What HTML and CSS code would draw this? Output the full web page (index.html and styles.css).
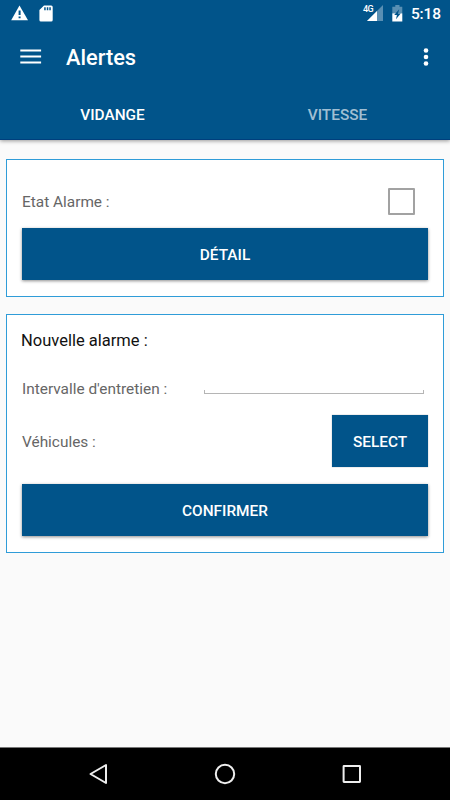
FILE: index.html
```
<!DOCTYPE html>
<html lang="fr">
<head>
  <meta charset="UTF-8">
  <meta name="viewport" content="width=device-width, initial-scale=1">
  <title>Alertes</title>
  <link rel="stylesheet" href="styles.css">
</head>
<body>

<header class="appbar">
  <!-- barre de statut -->
  <div class="status">
    <svg class="ic-warning" width="18" height="16" viewBox="0 0 18 16">
      <path fill="#fff" d="M8.5 0.5L17 15.2H0.2z"/>
      <path fill="#01548a" d="M7.6 5.5h2v4.6h-2zM7.6 11.5h2v1.8h-2z"/>
    </svg>
    <svg class="ic-sd" width="14" height="17" viewBox="0 0 14 17">
      <path fill="#fff" d="M5 0.5h7.2a1.5 1.5 0 0 1 1.5 1.5v13a1.5 1.5 0 0 1-1.5 1.5H1.9A1.5 1.5 0 0 1 .4 15V5z"/>
      <path fill="#01548a" d="M5.2 2.3h1.5v3H5.2zM7.8 2.3h1.5v3H7.8zM10.3 2.3h1.5v3h-1.5z"/>
    </svg>
    <div class="signal">
      <svg width="16" height="16" viewBox="0 0 16 16">
        <path fill="#fff" opacity=".35" d="M16 0v16H0z"/>
        <path fill="#fff" d="M10 6v10H0z"/>
      </svg>
      <span class="net">4G</span>
    </div>
    <svg class="ic-battery" width="11" height="17" viewBox="0 0 11 17">
      <path fill="#fff" opacity=".35" d="M3.3 0h4.2v1.7h2.8v6.6H.3V1.7h3z"/>
      <path fill="#fff" d="M.3 8.3h10v8.2H.3z"/>
      <path fill="#01548a" d="M7.2 4.2L2.2 9.9h2.7L4 14.3l4.7-5.9H6z"/>
    </svg>
    <span class="clock">5:18</span>
  </div>

  <div class="toolbar">
    <svg class="ic-menu" width="22" height="16" viewBox="0 0 22 16">
      <path fill="#fff" d="M.3 .5h20.8v2H.3zM.3 6.5h20.8v2H.3zM.3 12.5h20.8v2H.3z"/>
    </svg>
    <h1 class="title">Alertes</h1>
    <svg class="ic-more" width="6" height="20" viewBox="0 0 6 20">
      <g fill="#fff">
        <circle cx="3" cy="3.5" r="2.3"/>
        <circle cx="3" cy="10" r="2.3"/>
        <circle cx="3" cy="16.5" r="2.3"/>
      </g>
    </svg>
  </div>

  <nav class="tabs">
    <a class="tab active">VIDANGE</a>
    <a class="tab">VITESSE</a>
  </nav>
</header>

<main class="content">
  <section class="card card-etat">
    <div class="row row-etat">
      <span class="label">Etat Alarme :</span>
      <span class="checkbox"></span>
    </div>
    <button class="btn">DÉTAIL</button>
  </section>

  <section class="card card-new">
    <h2 class="card-title">Nouvelle alarme :</h2>
    <div class="row row-interval">
      <span class="label">Intervalle d'entretien :</span>
      <span class="field"></span>
    </div>
    <div class="row row-vehicles">
      <span class="label">Véhicules :</span>
      <button class="btn btn-select">SELECT</button>
    </div>
    <button class="btn">CONFIRMER</button>
  </section>
</main>

<!-- boutons de navigation -->
<footer class="navbar">
  <svg width="20" height="22" viewBox="0 0 20 22">
    <path fill="none" stroke="#eee" stroke-width="2" stroke-linejoin="round" d="M18 2v18L2.5 11z"/>
  </svg>
  <svg width="22" height="22" viewBox="0 0 22 22">
    <circle fill="none" stroke="#eee" stroke-width="2" cx="11" cy="11" r="9.2"/>
  </svg>
  <svg width="20" height="20" viewBox="0 0 20 20">
    <rect fill="none" stroke="#eee" stroke-width="2" x="1.6" y="2" width="16.4" height="16" rx=".4"/>
  </svg>
</footer>

</body>
</html>
```
FILE: styles.css
```
* {
  box-sizing: border-box;
}
body {
  margin: 0;
  height: 800px;
  display: flex;
  flex-direction: column;
  background-color: #fafafa;
  font-family: Roboto, "Noto Sans", sans-serif;
  overflow: hidden;
}
svg {
  display: block;
  flex: none;
}

.appbar {
  height: 140px;
  background-color: #01548a;
  color: #fff;
  border-bottom: 1px solid #003f7d;
  box-shadow: 0 1px 4px rgba(0,0,0,0.4);
}
.status {
  display: flex;
  align-items: center;
  height: 26px;
  padding: 0 9px 0 11px;
}
.ic-sd {
  margin-left: 10px;
}
.signal {
  position: relative;
  margin-left: auto;
}
.net {
  position: absolute;
  left: -4px;
  top: -1px;
  font-size: 9px;
  line-height: 10px;
  font-weight: 500;
  letter-spacing: -0.5px;
}
.ic-battery {
  margin-left: 9px;
}
.clock {
  margin-left: 8px;
  padding-top: 1px;
  font-size: 15.5px;
  font-weight: 500;
  letter-spacing: -0.1px;
}
.toolbar {
  display: flex;
  align-items: center;
  height: 62px;
  padding: 0 21px 0 20px;
}
.title {
  margin: 1px auto 0 24px;
  font-size: 21.8px;
  font-weight: 500;
}
.tabs {
  display: flex;
  height: 52px;
}
.tab {
  flex: 1;
  line-height: 54px;
  text-align: center;
  font-size: 15.4px;
  font-weight: 500;
  color: rgba(255,255,255,0.65);
}
.tab.active {
  color: #fff;
}

.content {
  flex: 1;
  padding: 19px 6px 0;
}
.card {
  background-color: #fff;
  border: 1px solid #2f9cd8;
  padding: 0 15px;
}
.card-etat {
  height: 138px;
  padding-top: 16px;
  margin-bottom: 17px;
}
.card-new {
  height: 239px;
}
.row {
  display: flex;
  align-items: center;
  justify-content: space-between;
}
.label {
  font-size: 15.4px;
  color: #666;
}
.row-etat {
  height: 52px;
}
.checkbox {
  width: 27px;
  height: 27px;
  margin: 0 13px 2px 0;
  border: 2px solid #a2a2a2;
  border-radius: 1px;
}
.btn {
  display: block;
  width: 100%;
  height: 52px;
  padding: 2px 0 0;
  border: none;
  background-color: #01548a;
  box-shadow: 0 1px 3px rgba(0,0,0,0.45);
  color: #fff;
  font-family: inherit;
  font-size: 15.4px;
  font-weight: 500;
}
.card-title {
  margin: 0 0 0 -1px;
  height: 50px;
  line-height: 51px;
  font-size: 16.5px;
  font-weight: 400;
  color: #111;
}
.row-interval {
  height: 48px;
}
.field {
  width: 220px;
  height: 4px;
  margin: 6px 4px 0 0;
  border: 1px solid #b5b5b5;
  border-top: none;
}
.row-vehicles {
  height: 56px;
  margin-bottom: 15px;
}
.row-vehicles .label {
  padding-top: 1px;
}
.btn-select {
  width: 96px;
  box-shadow: 0 0 1px rgba(0,0,0,0.4);
}

.navbar {
  display: flex;
  align-items: center;
  justify-content: space-between;
  height: 53px;
  padding: 0 88px;
  background-color: #000;
  border-top: 1px solid #777;
}
```
